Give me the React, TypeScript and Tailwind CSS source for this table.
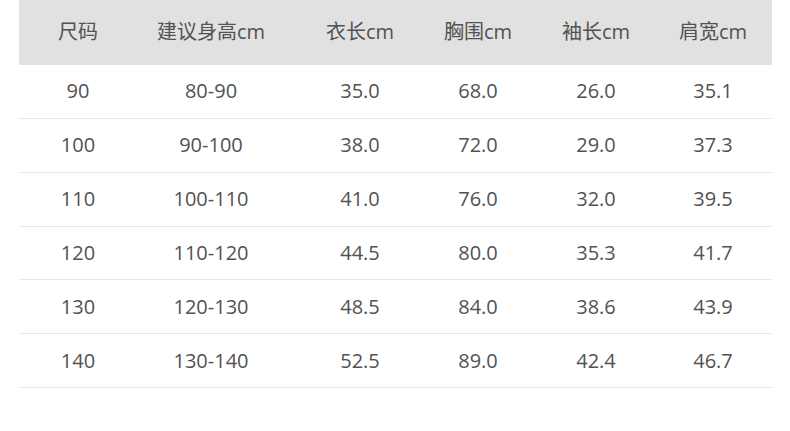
import React from 'react';

const headers = ['尺码', '建议身高cm', '衣长cm', '胸围cm', '袖长cm', '肩宽cm'];

const rows = [
  ['90', '80-90', '35.0', '68.0', '26.0', '35.1'],
  ['100', '90-100', '38.0', '72.0', '29.0', '37.3'],
  ['110', '100-110', '41.0', '76.0', '32.0', '39.5'],
  ['120', '110-120', '44.5', '80.0', '35.3', '41.7'],
  ['130', '120-130', '48.5', '84.0', '38.6', '43.9'],
  ['140', '130-140', '52.5', '89.0', '42.4', '46.7'],
];

// 列宽按截图里每列文字的中心位置算出来
const cols = 'grid grid-cols-[118px_148px_150px_86px_150px_84px_1fr]';

export default function App() {
  return (
    <div
      className="w-[790px] h-[431px] bg-white pl-[19px] pr-[18px] text-[20px] text-[#525252]"
      style={{ fontFamily: '"Open Sans", "Noto Sans CJK SC", sans-serif' }}
    >
      {/* 表头 */}
      <div className={`${cols} h-[65px] items-center bg-[#e1e1e1] pb-[1px]`}>
        {headers.map((h) => (
          <div key={h} className="text-center">
            {h}
          </div>
        ))}
      </div>

      {/* 数据行 */}
      {rows.map((r) => (
        <div key={r[0]} className={`${cols} h-[53.85px] items-center border-b border-[#e6e6e6]`}>
          {r.map((v, i) => (
            <div key={i} className="text-center">
              {v}
            </div>
          ))}
        </div>
      ))}
    </div>
  );
}
